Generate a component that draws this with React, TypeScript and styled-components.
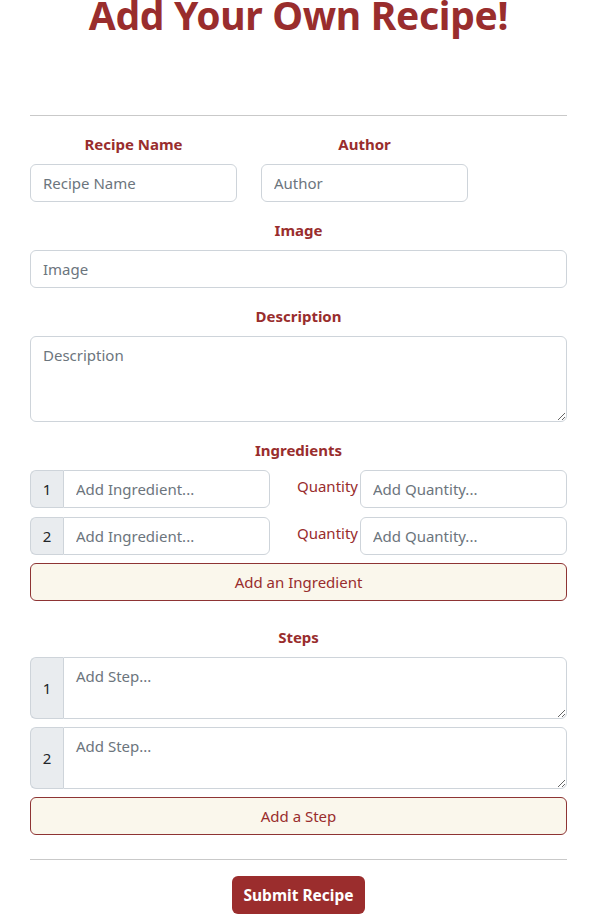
import React from "react";
import styled, { createGlobalStyle } from "styled-components";

const Global = createGlobalStyle`
  html, body { margin: 0; padding: 0; background: #fff; }
  body { font-family: "Noto Sans", "Open Sans", sans-serif; color: #212529; }
  * { box-sizing: border-box; }
`;

const RED = "#992d2d";

const Page = styled.div`
  padding: 0 40px 0 30px;
  overflow: hidden;
  height: 919px;
`;

const Title = styled.h1`
  margin: -9px 0 0;
  text-align: center;
  font-size: 39px;
  line-height: 48px;
  font-weight: 700;
  color: ${RED};
  letter-spacing: -0.3px;
`;

const Rule = styled.hr<{ $top: number }>`
  border: 0;
  border-top: 1px solid #c9c9c9;
  margin: ${(p) => p.$top}px 0 0;
`;

const Label = styled.div<{ $top: number }>`
  margin-top: ${(p) => p.$top}px;
  margin-bottom: 9px;
  text-align: center;
  font-size: 15px;
  line-height: 22px;
  font-weight: 700;
  color: ${RED};
`;

const TwoCols = styled.div`
  display: flex;
  gap: 24px;
`;

const Col = styled.div`
  width: 207px;
  display: flex;
  flex-direction: column;
`;

const inputBase = `
  font-family: inherit;
  font-size: 15px;
  line-height: 24px;
  color: #212529;
  border: 1px solid #ced4da;
  background: #fff;
  padding: 6px 12px;
  outline: none;
  &::placeholder { color: #6c757d; }
`;

const Input = styled.input`
  ${inputBase}
  width: 100%;
  height: 38px;
  border-radius: 6px;
`;

const TextArea = styled.textarea<{ $h: number }>`
  ${inputBase}
  width: 100%;
  height: ${(p) => p.$h}px;
  border-radius: 6px;
  resize: vertical;
  display: block;
`;

const Group = styled.div<{ $w?: string }>`
  display: flex;
  width: ${(p) => p.$w || "100%"};
`;

const Addon = styled.span`
  width: 33px;
  flex: none;
  display: flex;
  align-items: center;
  justify-content: center;
  background: #e9ecef;
  border: 1px solid #ced4da;
  border-right: 0;
  border-radius: 6px 0 0 6px;
  font-size: 15px;
  color: #212529;
`;

const GroupInput = styled.input`
  ${inputBase}
  flex: 1;
  min-width: 0;
  height: 38px;
  border-radius: 0 6px 6px 0;
`;

const GroupArea = styled.textarea`
  ${inputBase}
  flex: 1;
  min-width: 0;
  height: 62px;
  border-radius: 0 6px 6px 0;
  resize: vertical;
  display: block;
`;

const IngRow = styled.div<{ $top: number }>`
  display: flex;
  align-items: flex-start;
  margin-top: ${(p) => p.$top}px;
`;

const QtyLabel = styled.label`
  margin-left: auto;
  padding-top: 5px;
  padding-right: 2px;
  font-size: 15px;
  line-height: 22px;
  color: ${RED};
`;

const QtyInput = styled(Input)`
  width: 207px;
`;

const StepRow = styled(Group)<{ $top: number }>`
  margin-top: ${(p) => p.$top}px;
`;

const AddButton = styled.button<{ $top: number }>`
  display: block;
  width: 100%;
  height: 38px;
  margin-top: ${(p) => p.$top}px;
  background: #faf7ec;
  border: 1px solid #8e3434;
  border-radius: 6px;
  color: ${RED};
  font-family: inherit;
  font-size: 15px;
`;

const SubmitWrap = styled.div`
  display: flex;
  justify-content: center;
  margin-top: 16px;
`;

const Submit = styled.button`
  width: 133px;
  height: 38px;
  background: #9b2d2d;
  color: #fff;
  border: 0;
  border-radius: 6px;
  font-family: inherit;
  font-weight: 700;
  font-size: 15.5px;
`;

export default function App() {
  return (
    <Page>
      <Global />
      <Title>Add Your Own Recipe!</Title>
      <Rule $top={76} />
      <TwoCols>
        <Col>
          <Label $top={17}>Recipe Name</Label>
          <Input placeholder="Recipe Name" />
        </Col>
        <Col>
          <Label $top={17}>Author</Label>
          <Input placeholder="Author" />
        </Col>
      </TwoCols>
      <Label $top={17}>Image</Label>
      <Input placeholder="Image" />
      <Label $top={17}>Description</Label>
      <TextArea $h={86} placeholder="Description" />
      <Label $top={17}>Ingredients</Label>
      {[1, 2].map((n, i) => (
        <IngRow key={n} $top={i === 0 ? 0 : 9}>
          <Group $w="240px">
            <Addon>{n}</Addon>
            <GroupInput placeholder="Add Ingredient..." />
          </Group>
          <QtyLabel>Quantity</QtyLabel>
          <QtyInput placeholder="Add Quantity..." />
        </IngRow>
      ))}
      <AddButton $top={8}>Add an Ingredient</AddButton>
      <Label $top={25}>Steps</Label>
      {[1, 2].map((n, i) => (
        <StepRow key={n} $top={i === 0 ? 0 : 8}>
          <Addon>{n}</Addon>
          <GroupArea placeholder="Add Step..." />
        </StepRow>
      ))}
      <AddButton $top={8}>Add a Step</AddButton>
      <Rule $top={24} />
      <SubmitWrap>
        <Submit>Submit Recipe</Submit>
      </SubmitWrap>
    </Page>
  );
}
